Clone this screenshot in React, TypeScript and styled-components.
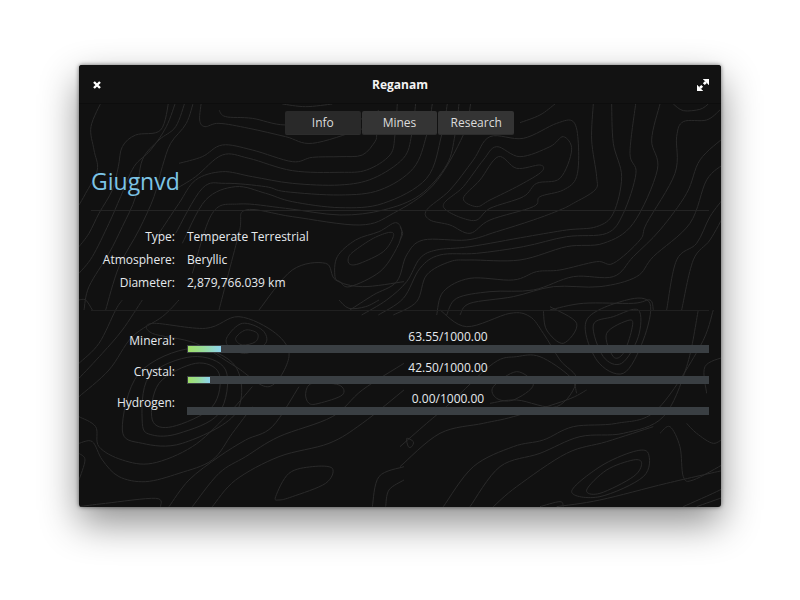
import React from "react";
import styled, { createGlobalStyle } from "styled-components";

type Point = [number, number];

interface Quadrant {
  x: number;
  y: number;
  lines: Point[][];
  loops: Point[][];
}

const GlobalStyle = createGlobalStyle`
  html, body {
    margin: 0;
    background: #fff;
  }
`;

const Page = styled.div`
  width: 800px;
  height: 600px;
  padding: 65px 79px 93px;
  box-sizing: border-box;
  overflow: hidden;
  font-family: "Open Sans", "Noto Sans", sans-serif;
  font-size: 12px;
  font-kerning: none;
  color: #e6eaee;
`;

const Window = styled.div`
  position: relative;
  height: 442px;
  background: #111111;
  border-radius: 3px;
  box-shadow: 0 16px 38px rgba(0, 0, 0, 0.45), 0 0 4px rgba(0, 0, 0, 0.55);
  overflow: hidden;
`;

const Contours = styled.svg`
  position: absolute;
  left: 0;
  top: 38px;
  width: 642px;
  height: 404px;
`;

const Content = styled.div`
  position: relative;
`;

const TitleBar = styled.header`
  height: 39px;
  box-sizing: border-box;
  padding: 1px 12px 0;
  display: flex;
  align-items: center;
  justify-content: space-between;
  background: #121212;
  border-bottom: 1px solid #0d0d0d;
`;

const Title = styled.h1`
  margin: 0;
  font-size: 12px;
  font-weight: 700;
  color: #f4f4f4;
`;

const IconButton = styled.span`
  width: 12px;
  height: 12px;
  display: flex;
`;

const Tabs = styled.nav`
  width: 229px;
  display: grid;
  grid-template-columns: repeat(3, 1fr);
  gap: 1px;
  margin: 7px 0 0 206px;
`;

const Tab = styled.div<{ $active?: boolean }>`
  height: 23px;
  line-height: 23px;
  text-align: center;
  background: ${(p) => (p.$active ? "#292929" : "#343434")};
  border-bottom: 1px solid #2c2c2c;
  border-radius: 2px;
  color: #dcdcdc;
`;

const Body = styled.main`
  padding: 0 12px;
`;

const PlanetName = styled.h2`
  margin: 30px 0 0;
  height: 45px;
  font-size: 23px;
  font-weight: 400;
  line-height: 33px;
  color: #7cc4e6;
  border-bottom: 1px solid #242424;
`;

const Facts = styled.dl`
  margin: 0;
  padding: 14px 0 16px;
  display: grid;
  grid-template-columns: 84px 1fr;
  column-gap: 12px;
  grid-auto-rows: 23px;
  align-items: center;
  border-bottom: 1px solid #202020;
`;

const Label = styled.dt`
  text-align: right;
`;

const Value = styled.dd`
  margin: 0;
`;

const Resources = styled.section`
  margin-top: 17px;
  display: grid;
  grid-template-columns: 84px 1fr;
  column-gap: 12px;
  grid-auto-rows: 31px;
`;

const ResourceLabel = styled.div`
  text-align: right;
  line-height: 17px;
  padding-top: 4px;
`;

const Meter = styled.div`
  text-align: center;
  line-height: 17px;
`;

const Track = styled.div`
  height: 8px;
  padding: 1px;
  box-sizing: border-box;
  background: #3a3f43;
`;

const Fill = styled.div`
  height: 6px;
  background: linear-gradient(to right, #a0e068, #98dc98 45%, #8ed4f0);
`;

// contour points are in 3x crop coordinates, one set per quarter of the window
const quadrants: Quadrant[] = [
  {
    x: 0,
    y: 0,
    lines: [
      [[70, 0], [36, 80], [45, 150], [55, 210], [20, 280], [0, 315]],
      [[270, 0], [245, 90], [170, 105], [130, 140], [118, 200], [100, 270], [60, 340], [30, 400], [0, 440]],
      [[292, 0], [262, 80], [215, 150], [165, 200], [125, 290], [90, 370], [40, 470], [0, 520]],
      [[320, 0], [290, 80], [240, 120], [190, 180], [170, 290], [130, 380], [90, 460], [30, 560], [15, 630]],
      [[345, 0], [322, 70], [275, 130], [250, 200], [225, 290], [180, 390], [120, 500], [80, 630]],
      [[368, 0], [362, 60], [378, 80], [420, 70], [510, 85], [620, 110], [700, 130], [840, 90], [890, 70]],
      [[420, 30], [440, 50], [520, 55], [620, 75], [760, 60], [860, 55], [900, 30]],
      [[300, 190], [370, 170], [430, 135], [520, 150], [640, 185], [700, 172], [783, 170], [850, 165], [888, 125], [893, 105]],
      [[285, 270], [350, 230], [430, 165], [510, 175], [640, 212], [783, 217], [863, 210], [933, 165], [948, 105], [955, 12]],
      [[240, 400], [300, 310], [350, 240], [430, 215], [520, 230], [640, 250], [783, 255], [883, 235], [973, 175], [998, 105], [1010, 12]],
      [[290, 400], [370, 265], [440, 250], [560, 260], [620, 275], [783, 285], [903, 270], [1003, 205], [1043, 105], [1060, 12]],
      [[310, 430], [380, 300], [470, 260], [560, 280], [640, 305], [783, 323], [913, 310], [1043, 235], [1088, 105], [1105, 12]],
      [[340, 520], [400, 340], [480, 312], [620, 325], [783, 345], [913, 330], [1023, 285], [1103, 195], [1128, 105], [1140, 12]],
      [[420, 630], [480, 400], [500, 330], [640, 350], [843, 375], [943, 340], [1063, 255], [1153, 105], [1175, 12]],
      [[540, 630], [640, 510], [740, 490], [770, 540], [850, 560], [975, 545]],
      [[0, 600], [20, 600], [40, 630]],
      [[610, 12], [680, 20], [760, 12]],
    ],
    loops: [
      [[808, 475], [823, 455], [883, 415], [933, 397], [943, 410], [913, 455], [843, 490], [813, 493]],
      [[768, 530], [775, 470], [830, 420], [900, 395], [950, 368], [968, 395], [953, 445], [903, 515], [813, 560], [783, 545]],
    ],
  },
  {
    x: 321,
    y: 0,
    lines: [
      [[580, 12], [575, 120], [590, 230], [585, 270], [520, 310], [480, 330], [400, 360], [290, 395], [200, 420], [70, 420], [20, 465], [-10, 545], [-80, 585], [-150, 630]],
      [[635, 12], [640, 130], [665, 230], [640, 340], [590, 380], [500, 390], [380, 410], [210, 440], [110, 450], [60, 475], [20, 545], [-40, 600], [-115, 645]],
      [[707, 12], [690, 160], [708, 220], [670, 340], [620, 400], [500, 410], [370, 440], [230, 460], [120, 465], [60, 505], [10, 595], [-65, 645]],
      [[780, 12], [755, 120], [772, 210], [700, 370], [610, 430], [500, 440], [360, 480], [210, 480], [150, 485], [80, 525], [50, 605], [-20, 645]],
      [[960, 30], [920, 60], [850, 65], [830, 110], [825, 220], [740, 370], [720, 420], [640, 490], [590, 485], [480, 510], [410, 515], [340, 540], [210, 535], [130, 575], [110, 645]],
      [[975, 110], [900, 180], [860, 280], [780, 390], [700, 470], [640, 530], [520, 530], [400, 570], [270, 575], [170, 595], [140, 645]],
      [[975, 190], [920, 240], [870, 370], [760, 470], [710, 530], [600, 560], [460, 560], [340, 590], [210, 610], [180, 645]],
      [[975, 290], [930, 350], [890, 430], [830, 480], [800, 630]],
      [[975, 340], [930, 420], [880, 480], [845, 630]],
      [[820, 12], [850, 32], [900, 28], [925, 12]],
      [[450, 630], [550, 610], [700, 610], [750, 600], [760, 630]],
      [[360, 68], [420, 45], [465, 12]],
      [[0, 380], [8, 400], [0, 420]],
    ],
    loops: [
      [[190, 295], [240, 240], [295, 170], [350, 205], [420, 195], [425, 215], [360, 255], [270, 300], [230, 320]],
      [[130, 320], [190, 260], [250, 180], [290, 140], [360, 170], [450, 140], [490, 110], [515, 150], [480, 235], [410, 250], [370, 290], [270, 325], [220, 362]],
      [[80, 330], [150, 270], [220, 180], [270, 110], [370, 115], [470, 70], [520, 65], [535, 130], [530, 230], [490, 270], [420, 290], [400, 320], [270, 360], [210, 400], [150, 375], [90, 360]],
    ],
  },
  {
    x: 0,
    y: 200,
    lines: [
      [[0, 190], [60, 130], [110, 30], [130, 0]],
      [[0, 235], [70, 160], [130, 90], [190, 0]],
      [[0, 290], [90, 210], [160, 110], [250, 50], [300, 0]],
      [[0, 430], [40, 425], [70, 480], [120, 530], [200, 545], [300, 520], [400, 480], [460, 400], [520, 320]],
      [[0, 620], [80, 610], [230, 595], [245, 620]],
      [[270, 620], [330, 540], [420, 470], [500, 420], [580, 380], [660, 260]],
      [[340, 620], [420, 520], [500, 470], [600, 410], [760, 350], [850, 270], [975, 190]],
      [[0, 460], [18, 480], [0, 540]],
      [[880, 620], [900, 530], [975, 500]],
      [[920, 620], [930, 570], [975, 540]],
      [[0, 350], [50, 380], [60, 440], [130, 480], [220, 490], [340, 440], [440, 350], [520, 260]],
      [[400, 620], [470, 540], [600, 470], [750, 430], [850, 370], [975, 270]],
      [[780, 0], [810, 25], [860, 20], [900, 0]],
    ],
    loops: [
      [[470, 115], [500, 90], [535, 100], [530, 125], [490, 135]],
      [[445, 110], [490, 70], [550, 90], [560, 130], [500, 160], [450, 140]],
      [[220, 70], [380, 85], [480, 50], [590, 100], [630, 170], [570, 260], [470, 200], [350, 130], [220, 100]],
      [[220, 360], [240, 250], [350, 190], [420, 220], [400, 320], [280, 380]],
      [[190, 370], [210, 230], [340, 170], [440, 210], [420, 340], [300, 400], [220, 405]],
      [[130, 390], [180, 220], [340, 145], [470, 200], [470, 340], [310, 430], [190, 430]],
      [[590, 590], [630, 520], [700, 500], [760, 505], [740, 550], [640, 590], [600, 600]],
      [[680, 280], [700, 250], [780, 255], [790, 285], [720, 310], [690, 310]],
    ],
  },
  {
    x: 321,
    y: 200,
    lines: [
      [[0, 440], [80, 370], [150, 310], [280, 190], [350, 170], [420, 170], [510, 230], [530, 280]],
      [[0, 500], [120, 400], [250, 370], [340, 350], [500, 300], [560, 270]],
      [[130, 620], [220, 500], [340, 440], [430, 420], [520, 380], [650, 370], [770, 330], [900, 140], [940, 30]],
      [[210, 620], [300, 500], [420, 460], [540, 410], [670, 400], [790, 350], [860, 200], [895, 30]],
      [[280, 620], [350, 560], [500, 460], [620, 425], [760, 380]],
      [[470, 620], [600, 600], [800, 550], [975, 510]],
      [[420, 620], [480, 605], [490, 620]],
      [[850, 620], [960, 570], [975, 555]],
      [[890, 620], [975, 590]],
      [[430, 30], [440, 90], [490, 130], [530, 70], [450, 20]],
      [[120, 30], [200, 80], [330, 40], [390, 50], [430, 100], [480, 180], [530, 240], [470, 320], [350, 300], [270, 310]],
      [[780, 400], [810, 380], [840, 440], [850, 530], [880, 540], [975, 490]],
      [[860, 370], [890, 400], [940, 430], [975, 410]],
      [[920, 280], [915, 200], [975, 170]],
    ],
    loops: [
      [[620, 100], [690, 60], [695, 90], [670, 160], [640, 170]],
      [[580, 75], [640, 50], [715, 30], [715, 110], [665, 190], [610, 170]],
      [[560, 60], [680, 0], [750, 10], [730, 120], [670, 220], [590, 180]],
      [[515, 575], [600, 500], [700, 455], [745, 460], [730, 530], [600, 590]],
      [[560, 570], [620, 510], [700, 480], [725, 490], [700, 530], [600, 580]],
      [[20, 415], [40, 425], [35, 440], [25, 440]],
      [[280, 260], [350, 215], [400, 255], [340, 300], [290, 295]],
    ],
  },
];

// catmull-rom through the traced points
function smooth(points: Point[], closed: boolean) {
  const n = points.length;
  const at = (i: number) =>
    closed ? points[(i + n) % n] : points[Math.max(0, Math.min(n - 1, i))];
  let d = `M${points[0][0]} ${points[0][1]}`;
  const segments = closed ? n : n - 1;
  for (let i = 0; i < segments; i++) {
    const [p0, p1, p2, p3] = [at(i - 1), at(i), at(i + 1), at(i + 2)];
    const c1x = p1[0] + (p2[0] - p0[0]) / 6;
    const c1y = p1[1] + (p2[1] - p0[1]) / 6;
    const c2x = p2[0] - (p3[0] - p1[0]) / 6;
    const c2y = p2[1] - (p3[1] - p1[1]) / 6;
    d += `C${c1x} ${c1y} ${c2x} ${c2y} ${p2[0]} ${p2[1]}`;
  }
  return closed ? d + "Z" : d;
}

function ContourLines() {
  return (
    <Contours viewBox="0 0 642 404" fill="none" stroke="#2a2a2a">
      {quadrants.map((q) => (
        <g key={`${q.x}-${q.y}`} transform={`translate(${q.x} ${q.y - 3}) scale(0.3333)`}>
          {q.lines.map((line, i) => (
            <path key={i} d={smooth(line, false)} strokeWidth={3} />
          ))}
          {q.loops.map((loop, i) => (
            <path key={i} d={smooth(loop, true)} strokeWidth={3} />
          ))}
        </g>
      ))}
    </Contours>
  );
}

const facts = [
  ["Type", "Temperate Terrestrial"],
  ["Atmosphere", "Beryllic"],
  ["Diameter", "2,879,766.039 km"],
];

const resources = [
  { name: "Mineral", amount: 63.55 },
  { name: "Crystal", amount: 42.5 },
  { name: "Hydrogen", amount: 0 },
];

const CAPACITY = 1000;

export default function App() {
  return (
    <Page>
      <GlobalStyle />
      <Window>
        <ContourLines />
        <Content>
          <TitleBar>
            <IconButton>
              <svg width="12" height="12" viewBox="0 0 12 12">
                <path d="M3 3l6 6M9 3l-6 6" stroke="#fff" strokeWidth="2.4" />
              </svg>
            </IconButton>
            <Title>Reganam</Title>
            <IconButton>
              <svg width="12" height="12" viewBox="0 0 12 12" fill="#fff" stroke="#fff">
                <path d="M12 0v6L6 0z" strokeWidth="0.4" />
                <path d="M0 12V6l6 6z" strokeWidth="0.4" />
                <path d="M9 3L6.8 5.2M3 9l2.2-2.2" strokeWidth="2.6" />
              </svg>
            </IconButton>
          </TitleBar>
          <Tabs>
            <Tab $active>Info</Tab>
            <Tab>Mines</Tab>
            <Tab>Research</Tab>
          </Tabs>
          <Body>
            <PlanetName>Giugnvd</PlanetName>
            <Facts>
              {facts.map(([label, value]) => (
                <React.Fragment key={label}>
                  <Label>{label}:</Label>
                  <Value>{value}</Value>
                </React.Fragment>
              ))}
            </Facts>
            <Resources>
              {resources.map((r) => (
                <React.Fragment key={r.name}>
                  <ResourceLabel>{r.name}:</ResourceLabel>
                  <Meter>
                    {r.amount.toFixed(2)}/{CAPACITY.toFixed(2)}
                    <Track>
                      <Fill style={{ width: `${(r.amount / CAPACITY) * 100}%` }} />
                    </Track>
                  </Meter>
                </React.Fragment>
              ))}
            </Resources>
          </Body>
        </Content>
      </Window>
    </Page>
  );
}
